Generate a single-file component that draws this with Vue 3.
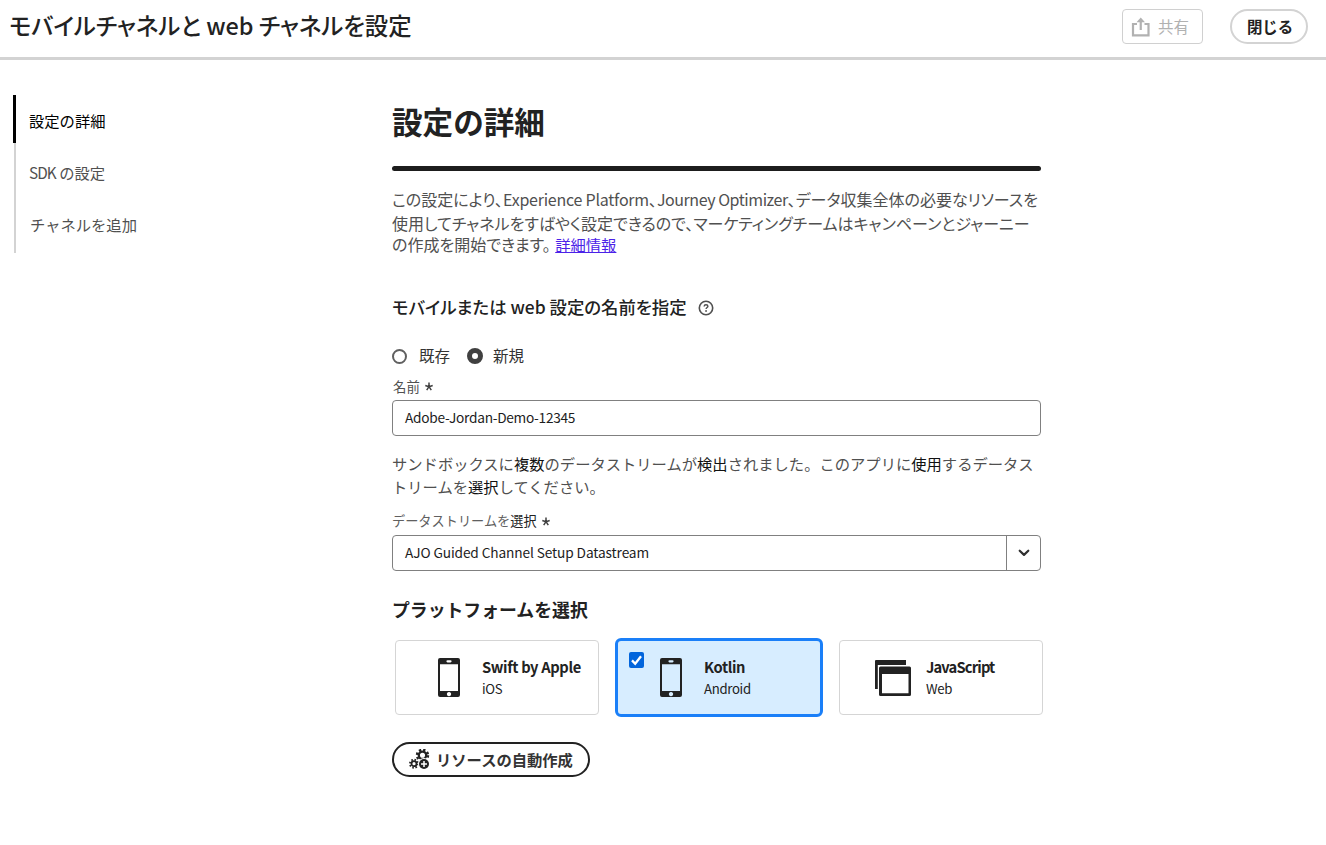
<script setup>
import { ref } from 'vue'

const platforms = [
  { name: 'Swift by Apple', os: 'iOS', icon: 'phone' },
  { name: 'Kotlin', os: 'Android', icon: 'phone' },
  { name: 'JavaScript', os: 'Web', icon: 'windows' },
]
const selected = ref('Kotlin')
const mode = ref('new')
</script>

<template>
  <div class="page">
    <header class="topbar">
      <h2 class="title"><span>モバイルチャネルと web チャネルを設定</span></h2>
      <button class="share">
        <svg width="20" height="20" viewBox="0 0 20 20" fill="none" stroke="#b1b1b1" stroke-width="2.200">
          <path d="M6 7H2v11.300h15.500V7h-4" />
          <path d="M9.750 13V3.500" />
          <path d="M9.750 0.500L14 5.200H5.500z" fill="#b1b1b1" stroke="none" />
        </svg>
        <span>共有</span>
      </button>
      <button class="close"><span>閉じる</span></button>
    </header>

    <div class="body">
      <nav class="steps">
        <div class="step active">設定の詳細</div>
        <div class="step"><span class="sdk">SDK</span> の設定</div>
        <div class="step last">チャネルを追加</div>
      </nav>

      <main class="content">
        <h1>設定の詳細</h1>
        <div class="rule"></div>
        <p class="intro">
          <span class="l1">この設定により、<em class="n1">Experience Platform</em>、<em class="n2">Journey Optimizer</em>、データ収集全体の必要なリソースを</span>
          <span class="l2">使用してチャネルをすばやく設定できるので、マーケティングチームはキャンペーンとジャーニー</span>
          <span class="l3">の作成を開始できます。 <a>詳細情報</a></span>
        </p>

        <div class="name-head">
          <h3>モバイルまたは web 設定の名前を指定</h3>
          <svg width="16" height="16" viewBox="0 0 16 16" fill="none" stroke="#505050">
            <circle cx="8" cy="8" r="6.700" stroke-width="1.600" />
            <path d="M6.100 6.500C6.200 5.200 7 4.700 8 4.700c1.100 0 1.900.6 1.900 1.500 0 1.300-1.800 1.300-1.800 2.800" stroke-width="1.400" />
            <circle cx="8.050" cy="11" r=".9" fill="#505050" stroke="none" />
          </svg>
        </div>

        <div class="radios">
          <label @click="mode = 'old'"><i class="dot" :class="{ on: mode === 'old' }"></i><span>既存</span></label>
          <label @click="mode = 'new'"><i class="dot" :class="{ on: mode === 'new' }"></i><span>新規</span></label>
        </div>

        <div class="label"><span>名前</span>
          <svg width="8" height="9" viewBox="0 0 8 9"><path d="M4 .6V4.700M.3 3.500L4 4.700M7.700 3.500L4 4.700M1.700 8.100L4 4.700M6.300 8.100L4 4.700" stroke="#404040" stroke-width="1.500" /></svg>
        </div>
        <div class="field input">Adobe-Jordan-Demo-12345</div>

        <p class="note">
          <span>サンドボックスに<b>複数</b>のデータストリームが<b>検出</b>されました。このアプリに<b>使用</b>するデータス</span>
          <span>トリームを<b>選択</b>してください。</span>
        </p>

        <div class="label stream">データストリームを<b>選択</b>
          <svg width="8" height="9" viewBox="0 0 8 9"><path d="M4 .6V4.700M.3 3.500L4 4.700M7.700 3.500L4 4.700M1.700 8.100L4 4.700M6.300 8.100L4 4.700" stroke="#404040" stroke-width="1.500" /></svg>
        </div>
        <div class="field select">
          <span>AJO Guided Channel Setup Datastream</span>
          <div class="chev">
            <svg width="12" height="8" viewBox="0 0 12 8" fill="none" stroke="#303030" stroke-width="2.200" stroke-linecap="round" stroke-linejoin="round"><path d="M1.700 1.700L6 5.900l4.300-4.200" /></svg>
          </div>
        </div>

        <h3 class="plat-head">プラットフォームを選択</h3>
        <div class="cards">
          <div v-for="p in platforms" :key="p.name" class="card" :class="[p.icon, { selected: p.name === selected }]" @click="selected = p.name">
            <div v-if="p.name === selected" class="check">
              <svg width="15" height="16" viewBox="0 0 15 16" fill="none" stroke="#fff" stroke-width="2.300"><path d="M3 8.400l3.200 3.400L12 4.200" /></svg>
            </div>
            <div class="icon">
              <svg v-if="p.icon === 'phone'" width="22" height="39" viewBox="0 0 22 39">
                <path fill="#222" fill-rule="evenodd" d="M2 0H20a2 2 0 0 1 2 2V37a2 2 0 0 1-2 2H2a2 2 0 0 1-2-2V2A2 2 0 0 1 2 0zM2 6.300V33H20V6.300zM9.500 2.200a1 1 0 0 0 0 2.200h3a1 1 0 0 0 0-2.200zM11 34a2.100 2.100 0 1 0 .01 0z" />
              </svg>
              <svg v-else width="36" height="37" viewBox="0 0 36 37">
                <path fill="#222" d="M1 0H31V5H2.800V29H0V1A1 1 0 0 1 1 0z" />
                <path fill="#222" fill-rule="evenodd" d="M5.500 6.500H34.500A1.500 1.500 0 0 1 36 8V34.500A1.500 1.500 0 0 1 34.500 36H5.500A1.500 1.500 0 0 1 4 34.500V8A1.500 1.500 0 0 1 5.500 6.500zM7 14V33.300H33.500V14z" />
              </svg>
            </div>
            <div class="txt">
              <div class="name">{{ p.name }}</div>
              <div class="os">{{ p.os }}</div>
            </div>
          </div>
        </div>

        <button class="auto">
          <svg width="21" height="21" viewBox="0 0 21 21" fill="none" stroke="#222">
            <circle cx="13.500" cy="6.300" r="3.700" stroke-width="2.300" />
            <circle cx="13.500" cy="6.300" r="5.500" stroke-width="2.400" stroke-dasharray="2.300 2.020" />
            <circle cx="5" cy="14.700" r="2.500" stroke-width="1.800" />
            <circle cx="5" cy="14.700" r="4.100" stroke-width="1.800" stroke-dasharray="1.600 1.620" />
            <circle cx="15" cy="15" r="6" fill="#fff" stroke="none" />
            <circle cx="15" cy="15" r="5" fill="#222" stroke="none" />
            <path d="M15 12v6M12 15h6" stroke="#fff" stroke-width="1.500" />
          </svg>
          <span>リソースの自動作成</span>
        </button>
      </main>
    </div>
  </div>
</template>

<style>
body { margin: 0; background: #fff; }
</style>

<style scoped>
.page {
  width: 1326px;
  height: 845px;
  overflow: hidden;
  background: #fff;
  color: #222;
  font-family: "Noto Sans CJK JP", "Noto Sans", sans-serif;
  white-space: nowrap;
}
h1, h2, h3, p { margin: 0; }
em { font-style: normal; }
button { font-family: inherit; padding: 0; box-sizing: border-box; background: #fff; display: flex; align-items: center; }
button span { padding-bottom: 2px; }
svg { display: block; flex: none; }
.topbar {
  display: flex;
  box-sizing: border-box;
  height: 60px;
  border-bottom: 3px solid #d3d3d3;
  padding: 9px 18px 0 9px;
  align-items: flex-start;
}
.title { font-size: 23.4px; line-height: 32px; font-weight: 500; flex: 1; font-feature-settings: "palt"; }
.share { width: 81px; height: 35px; border: 1px solid #d0d0d0; border-radius: 4px; color: #b1b1b1; font-size: 15.5px; padding-left: 8px; gap: 7px; }
.close { width: 78px; height: 35px; border: 2px solid #d3d3d3; border-radius: 18px; margin-left: 27px; padding-left: 2px; justify-content: center; font-size: 15.4px; font-weight: 700; color: #222; }
.body { display: flex; }
.steps { width: 379px; margin: 35px 0 0 13px; flex: none; }
.step { box-sizing: border-box; margin-left: 1px; border-left: 2px solid #d3d3d3; height: 52px; line-height: 58px; padding-left: 13px; font-size: 15.3px; color: #505050; }
.step.active { margin-left: 0; border-left: 3px solid #000; color: #000; height: 48px; line-height: 51px; }
.step.last { height: 58px; line-height: 58px; padding-left: 14px; }
.sdk { letter-spacing: -0.9px; }
.content { width: 651px; padding-top: 41px; }
h1 { font-size: 30.6px; line-height: 40px; font-weight: 700; }
.rule { width: 649px; height: 5px; border-radius: 3px; background: #1d1d1d; margin-top: 25px; }
.intro { margin-top: 16px; font-size: 16px; color: #505050; font-feature-settings: "palt"; }
.intro span { display: block; height: 24px; line-height: 24px; }
.intro .l3 { height: 20px; line-height: 18px; }
.intro a { color: #4b22e8; text-decoration: underline; font-size: 15.3px; font-feature-settings: normal; margin-left: 1px; }
.n1 { letter-spacing: -0.23px; }
.n2 { letter-spacing: -0.45px; }
.name-head { display: flex; align-items: center; gap: 11px; height: 26px; margin-top: 39px; }
.name-head h3 { font-size: 17.4px; line-height: 26px; font-weight: 500; font-feature-settings: "palt"; }
.name-head svg { margin-top: 2px; }
.radios { display: flex; height: 24px; margin-top: 24px; gap: 17px; font-size: 15.5px; line-height: 24px; color: #333; }
.radios label { display: flex; align-items: center; gap: 12px; }
.radios span { padding-bottom: 3px; }
.dot { width: 15px; height: 15px; box-sizing: border-box; border: 2px solid #606060; border-radius: 50%; }
.dot.on { width: 16px; height: 16px; border: 5px solid #404040; margin-right: -2px; }
.label { display: flex; align-items: center; gap: 5px; height: 20px; line-height: 20px; margin-top: 8px; font-size: 13.4px; color: #505050; }
.label span { margin-left: 1px; padding-bottom: 1px; }
.field { box-sizing: border-box; width: 649px; height: 36px; margin-top: 4px; border: 1px solid #808080; border-radius: 4px; padding-left: 12px; line-height: 33px; font-size: 13.7px; color: #1d1d1d; }
.input { letter-spacing: -0.28px; }
.note { margin-top: 16px; font-size: 15.3px; color: #505050; }
.note span { display: block; line-height: 23px; height: 23px; }
.note b { font-weight: 400; color: #111; }
.stream { margin-top: 13px; font-size: 13.2px; gap: 0; color: #606060; }
.stream b { font-weight: 400; color: #222; margin-right: 5px; }
.select { display: flex; justify-content: space-between; margin-top: 4px; letter-spacing: -0.12px; }
.chev { width: 33px; border-left: 1px solid #808080; display: flex; align-items: center; justify-content: center; }
.plat-head { font-size: 17.85px; line-height: 26px; margin-top: 25px; font-weight: 700; }
.cards { display: flex; align-items: center; gap: 16px; margin: 16px 0 0 3px; height: 79px; }
.card { box-sizing: border-box; width: 204px; height: 75px; border: 1px solid #d5d5d5; border-radius: 4px; display: flex; position: relative; flex: none; }
.card.selected { width: 208px; height: 79px; border: 3px solid #1a7ff8; border-radius: 6px; background: #d7edff; }
.check { position: absolute; left: 11px; top: 11px; width: 15px; height: 16px; background: #0265dc; border-radius: 2px; }
.icon { width: 36px; margin-left: 35px; padding-top: 17px; display: flex; justify-content: center; }
.windows .icon { padding-top: 19px; }
.txt { margin-left: 15px; padding-top: 16px; }
.name { font-size: 14.7px; line-height: 20px; font-weight: 700; letter-spacing: -0.36px; }
.windows .name { letter-spacing: -0.84px; }
.os { font-size: 13.2px; line-height: 24px; letter-spacing: -0.32px; }
.auto { width: 198px; height: 35px; margin-top: 25px; border: 2px solid #222; border-radius: 18px; padding-left: 15px; gap: 6px; font-size: 15.3px; font-weight: 700; color: #333; }
.auto span { padding-bottom: 1px; }
</style>
